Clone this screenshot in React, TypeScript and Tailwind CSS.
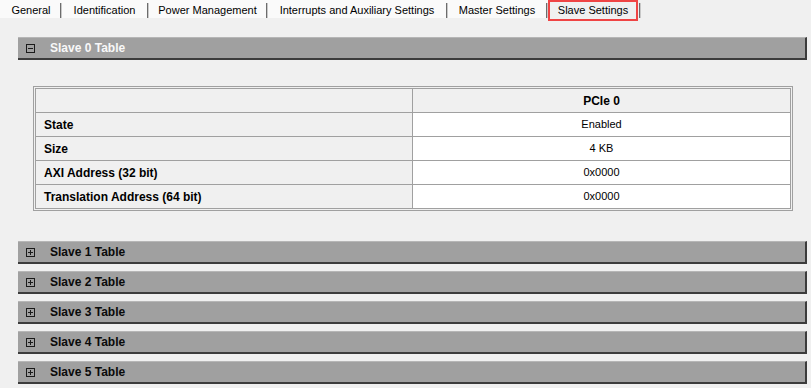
import React from "react";

const tabs = [
  { label: "General", w: "w-[58px]" },
  { label: "Identification", w: "w-[85px]" },
  { label: "Power Management", w: "w-[117px]" },
  { label: "Interrupts and Auxiliary Settings", w: "w-[178px]" },
  { label: "Master Settings", w: "w-[98px]" },
];

function ToggleIcon({ open }: { open: boolean }) {
  return (
    <svg width="9" height="9" viewBox="0 0 9 9" className="shrink-0">
      <rect x="0.5" y="0.5" width="8" height="8" fill="none" stroke="#1a1a1a" strokeWidth="1" />
      <line x1="2" y1="4.5" x2="7" y2="4.5" stroke="#1a1a1a" strokeWidth="1" />
      {!open && <line x1="4.5" y1="2" x2="4.5" y2="7" stroke="#1a1a1a" strokeWidth="1" />}
    </svg>
  );
}

function Bar({ title, open }: { title: string; open?: boolean }) {
  return (
    <div className="flex h-[23px] items-center border-t border-t-[#b6b6b6] border-b-2 border-b-[#3c3c3c] border-r-2 border-r-[#3c3c3c] bg-[#a0a0a0] pl-[8px]">
      <ToggleIcon open={!!open} />
      <span
        className={
          "ml-[15px] text-[12px] font-bold leading-none " +
          (open ? "text-[#f8f8f8]" : "text-[#0a0a0a]")
        }
      >
        {title}
      </span>
    </div>
  );
}

const rows = [
  ["State", "Enabled"],
  ["Size", "4 KB"],
  ["AXI Address (32 bit)", "0x0000"],
  ["Translation Address (64 bit)", "0x0000"],
];

export default function App() {
  return (
    <div className="w-[811px] h-[388px] overflow-hidden bg-[#f0f0f0] font-['Liberation_Sans',Arial,sans-serif] text-black">
      {/* Tab strip */}
      <div className="flex h-[18px] items-start">
        <div className="flex h-[18px] bg-[#fafafa] pl-[2px]">
          {tabs.map((t) => (
            <div key={t.label} className="flex h-[18px]">
              <div className={"flex h-[18px] items-center justify-center pt-[3px] text-[11px] leading-none " + t.w}>
                {t.label}
              </div>
              <div className="mt-[3px] h-[15px] w-[2px] border-l border-l-[#6c6c6c] border-r border-r-[#c8c8c8]" />
            </div>
          ))}
        </div>
        <div className="flex h-[21px] w-[90px] items-center justify-center border-2 border-[#ef4444] bg-[#f0f0f0] text-[11px] leading-none">
          Slave Settings
        </div>
        <div className="mt-[3px] ml-[1px] h-[15px] w-[2px] border-l border-l-[#6c6c6c] border-r border-r-[#c8c8c8]" />
      </div>

      <div className="pl-[18px] pr-[4px] pt-[19px]">
        <Bar title="Slave 0 Table" open />

        <div className="pl-[15px] pr-[14px] pt-[26px] pb-[30px]">
          <div className="border border-[#a0a0a0] p-[1px]">
            <div className="border border-[#a0a0a0]">
              <div className="flex h-[23px] bg-[#f0f0f0]">
                <div className="w-1/2 border-r border-r-[#a0a0a0]" />
                <div className="flex w-1/2 items-center justify-center text-[12px] font-bold leading-none">
                  PCIe 0
                </div>
              </div>
              {rows.map(([k, v]) => (
                <div key={k} className="flex h-[24px] border-t border-t-[#a0a0a0]">
                  <div className="flex w-1/2 items-center border-r border-r-[#a0a0a0] bg-[#f0f0f0] pl-[8px] text-[12px] font-bold leading-none">
                    {k}
                  </div>
                  <div className="flex w-1/2 items-center justify-center bg-white text-[11px] leading-none">
                    {v}
                  </div>
                </div>
              ))}
            </div>
          </div>
        </div>

        <div className="flex flex-col gap-[7px]">
          {[1, 2, 3, 4, 5].map((i) => (
            <Bar key={i} title={`Slave ${i} Table`} />
          ))}
        </div>
      </div>
    </div>
  );
}
